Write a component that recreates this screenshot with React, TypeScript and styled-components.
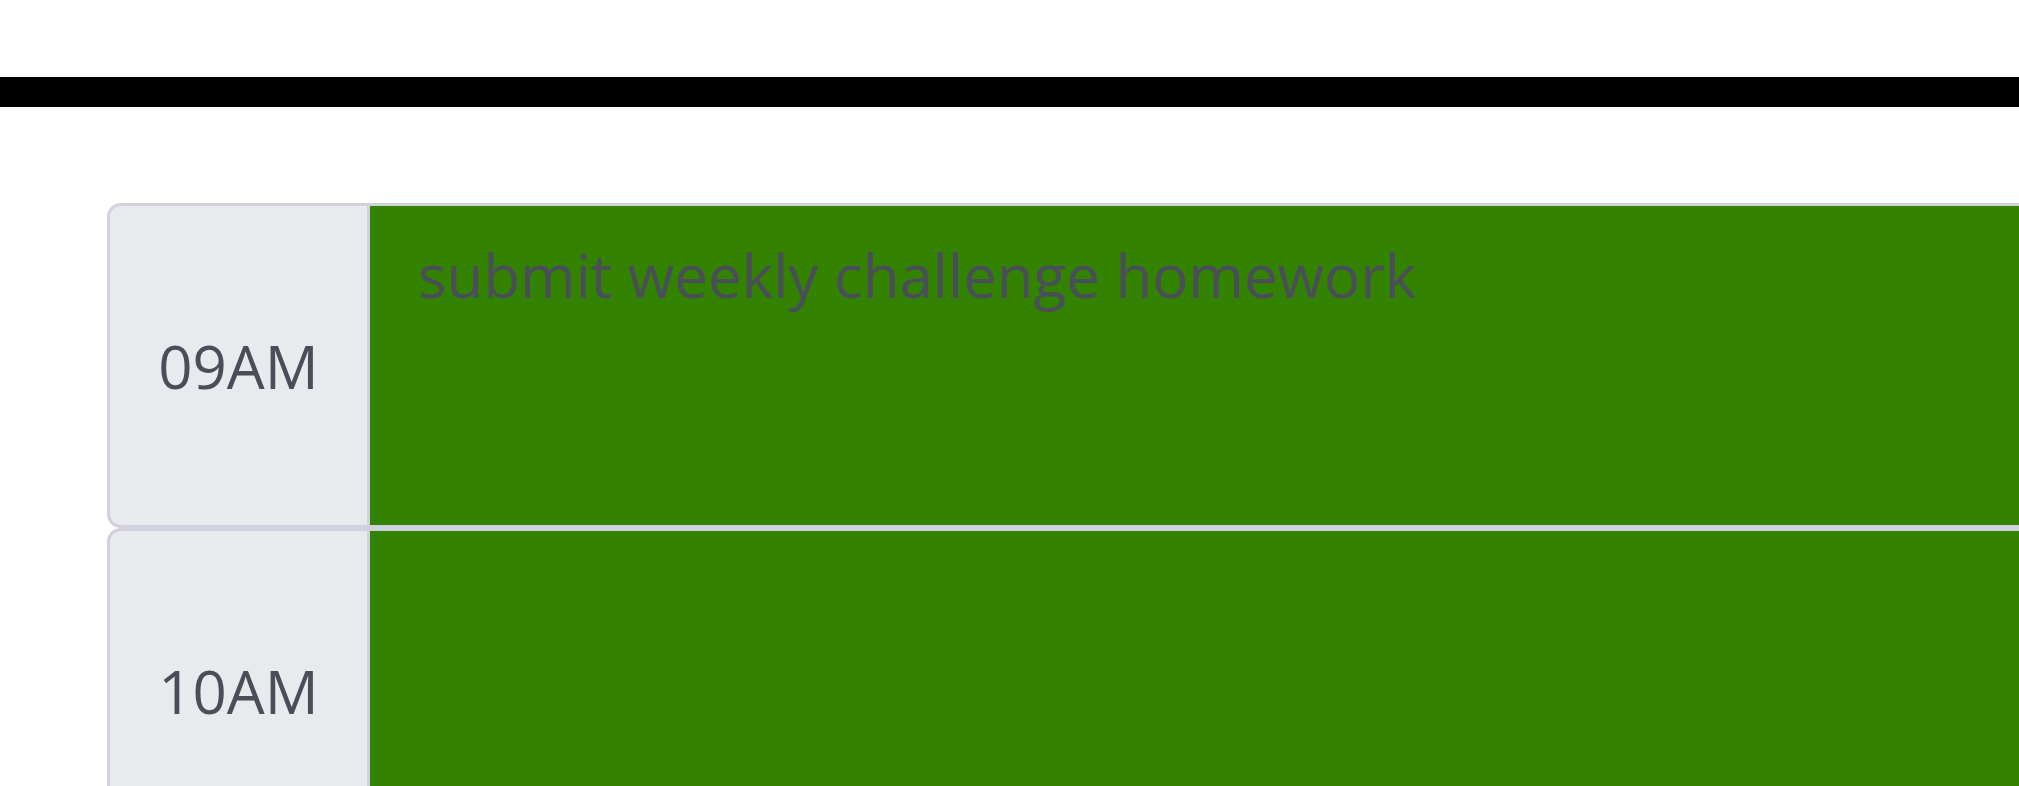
import React from "react";
import styled, { createGlobalStyle } from "styled-components";

const GlobalStyle = createGlobalStyle`
  html, body {
    margin: 0;
    padding: 0;
    overflow: hidden;
    background: #ffffff;
  }
  body {
    font-family: "Open Sans", "Noto Sans", sans-serif;
    color: #4a4e59;
  }
  *, *::before, *::after { box-sizing: border-box; }
`;

const Header = styled.header`
  padding-top: 77px;
`;

const Bar = styled.div`
  height: 30px;
  background: #000000;
`;

const Schedule = styled.main`
  display: flex;
  flex-direction: column;
  padding: 96px 0 0 107px;
`;

const Row = styled.div`
  display: flex;
  align-items: stretch;
  width: 100vw;
  height: 325px;
  flex: 0 0 auto;
`;

const Hour = styled.div`
  flex: 0 0 263px;
  display: flex;
  align-items: center;
  justify-content: center;
  background: #e9eaee;
  border: 3px solid #d0d1da;
  border-radius: 14px 0 0 14px;
  color: #4a4e59;
  font-size: 60px;
  line-height: 1.5;
  position: relative;
  z-index: 1;
`;

const Task = styled.textarea<{ $tone: string }>`
  flex: 1 1 auto;
  margin-left: -3px;
  padding: 24px 48px;
  border: 3px solid #d0d1da;
  border-radius: 0;
  background: ${(p) => p.$tone};
  color: #4a4e59;
  font-family: inherit;
  font-size: 60px;
  line-height: 1.5;
  resize: none;
  outline: none;
  overflow: hidden;
`;

const hours = [
  { label: "09AM", text: "submit weekly challenge homework" },
  { label: "10AM", text: "" },
];

export default function App() {
  return (
    <>
      <GlobalStyle />
      <Header>
        <Bar />
      </Header>
      <Schedule>
        {hours.map((h) => (
          <Row key={h.label}>
            <Hour>{h.label}</Hour>
            <Task $tone="#338200" defaultValue={h.text} rows={3} />
          </Row>
        ))}
      </Schedule>
    </>
  );
}
